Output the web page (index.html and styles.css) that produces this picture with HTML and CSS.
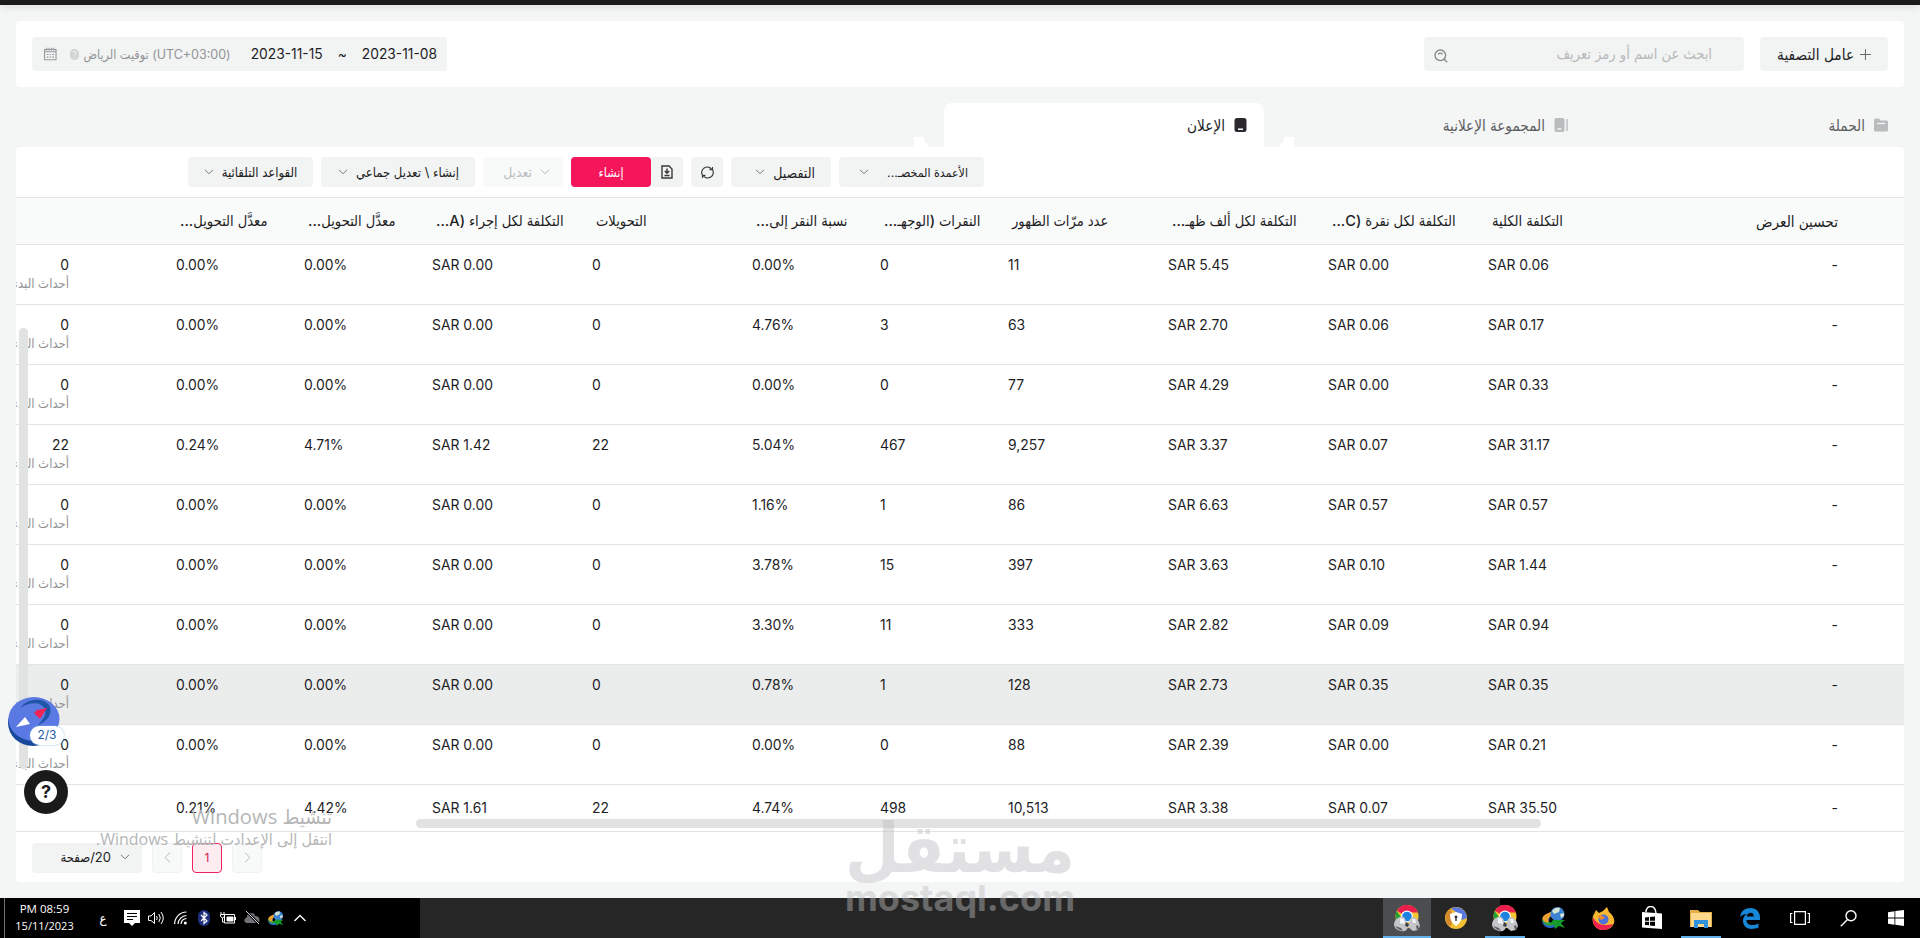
FILE: index.html
```html
<!DOCTYPE html>
<html lang="ar" dir="rtl">
<head>
  <meta charset="UTF-8" />
  <meta name="viewport" content="width=device-width, initial-scale=1.0"/>
  <title>مدير الإعلانات</title>
  <link rel="stylesheet" href="styles.css">
</head>
<body>
  <svg width="0" height="0" class="defs">
    <symbol id="down" viewBox="0 0 10 6"><path d="M1 .8l4 4 4-4" fill="none" stroke="currentColor"/></symbol>
    <symbol id="chrome" viewBox="0 0 26 28">
      <circle cx="13" cy="12.500" r="11.500" fill="#f6c52f"/>
      <path d="M13 12.500L3 7A11.500 11.500 0 0 1 24 8.500H13z" fill="#e91e4d"/>
      <path d="M2.800 7l8 12-1 4A11.500 11.500 0 0 1 2.800 7z" fill="#1fa034"/>
      <circle cx="13" cy="12.500" r="6" fill="#fff"/>
      <circle cx="13" cy="12.500" r="4.800" fill="#1e82e0"/>
      <path d="M0 20c1-5 4-7 7-7 3-1 5 2 5 6l3 1c0-5 2-7 5-7 3 1 5 4 6 9l-2 4-5 1-5-4c-1 4-4 5-7 4-4-1-7-3-7-7z" fill="#c4c5c8"/>
      <path d="M1 22l3 3 5 2-2-3zM22 22l1 4 2-1-1-4z" fill="#5b5c61"/>
      <path d="M12 18l3 2-1 3-3-1z" fill="#3f4046"/>
      <path d="M6 14l4 1 1 5-5-1zM18 15l3 0 1 4-3 0z" fill="#f3f3f3"/>
    </symbol>
    <symbol id="idm" viewBox="0 0 24 22">
      <path d="M9 5C2 8-1 13 1 17c3 5 10 5 15 1l-3-3c-3 2-6 2-6-1 0-2 1-4 3-6z" fill="#2a63c8"/>
      <path d="M9 5C2 8-1 13 1 15c3 4 8 5 12 2l-1-2c-3 1-6 1-6-2 0-2 2-4 4-6z" fill="#31a43c"/>
      <path d="M9 5C2 7-1 11 1 13c1 2 4 3 6 2-2-2 0-5 3-7z" fill="#eda12c"/>
      <circle cx="15.500" cy="7" r="7" fill="#3b82d2"/>
      <path d="M10 4c2-3 5-4 8-3l-1 4-5 2zM18 7l4-1 0 3-3 2z" fill="#d7e4cf"/>
      <path d="M11 13l12 0-4 3 4 5-6-2-4 3-1-4-4-1z" fill="#159a2c"/>
    </symbol>
  </svg>

  <div class="top-bar"></div>

  <main>
    <section class="filters">
      <button class="btn filter-btn">
        <svg width="11" height="11" viewBox="0 0 11 11"><path d="M5.500 0v11M0 5.500h11" stroke="#666"/></svg>
        <span>عامل التصفية</span>
      </button>
      <div class="search">
        <span>ابحث عن اسم أو رمز تعريف</span>
        <svg width="14" height="14" viewBox="0 0 14 14" fill="none" stroke="#85868a" stroke-width="1.300"><circle cx="6.300" cy="6.300" r="5.300"/><path d="M10.200 10.200l3 3M4 5.300q2.300-2.500 4.600 0"/></svg>
      </div>
      <div class="dates">
        <span>2023-11-08</span>
        <span class="tilde">~</span>
        <span>2023-11-15</span>
        <span class="zone">(UTC+03:00) توقيت الرياض</span>
        <span class="hint">?</span>
        <svg width="14" height="14" viewBox="0 0 14 14" fill="none" stroke="#96979a" stroke-width="1.200"><path d="M.6 2h12.800v11.400H.6zM.6 4.500h12.800M3 0v3M5.700 0v3M8.400 0v3M11 0v3"/><path d="M3 7.500h2m1.300 0h1.500m1.300 0h2M3 10.500h2m1.300 0h1.500m1.300 0h2"/></svg>
      </div>
    </section>

    <nav class="tabs">
      <div class="tab">
        <svg width="14" height="14" viewBox="0 0 14 14"><path d="M0 2q0-1.500 1.500-1.500H5l1.500 2h6q1.500 0 1.500 1.500v8q0 1.500-1.500 1.500h-11Q0 13.500 0 12z" fill="#b9bbbc"/><path d="M3 5.500h8" stroke="#f4f5f5" stroke-width="1.300"/></svg>
        <span>الحملة</span>
      </div>
      <div class="tab">
        <svg width="14" height="14" viewBox="0 0 14 14"><rect width="10" height="14" x=".5" rx="2" fill="#b9bbbc"/><path d="M3.500 11h4" stroke="#f4f5f5" stroke-width="1.500"/><path d="M13 1v12" stroke="#b9bbbc" stroke-width="1.400"/></svg>
        <span>المجموعة الإعلانية</span>
      </div>
      <div class="tab active">
        <svg width="14" height="14" viewBox="0 0 14 14"><rect width="12" height="14" x=".5" rx="2.500" fill="#2c2830"/><path d="M4 11.200h5" stroke="#fff" stroke-width="1.500"/></svg>
        <span>الإعلان</span>
      </div>
    </nav>

    <section class="card">
      <div class="toolbar">
        <button class="btn w145"><span>الأعمدة المخصـ...</span><svg class="arrow"><use href="#down"/></svg></button>
        <button class="btn w100 large"><span>التفصيل</span><svg class="arrow"><use href="#down"/></svg></button>
        <button class="btn w32"><svg width="13" height="13" viewBox="0 0 13 13" fill="none" stroke="#3c3c3e" stroke-width="1.200"><path d="M1.600 9.500A5.300 5.300 0 0 1 10.800 3.500M11.400 3.500A5.300 5.300 0 0 1 2.200 9.500M8.500 3.700h3V1M4.500 9.300h-3V12"/></svg></button>
        <div class="group">
          <button class="btn w32"><svg width="12" height="14" viewBox="0 0 12 14" fill="none" stroke="#38383a" stroke-width="1.400"><path d="M1 1h7l3 3v9H1z"/><path d="M6 3.500v4.500M3.800 6L6 8.200 8.200 6M3.500 10.500h5"/></svg></button>
          <button class="btn create"><span>إنشاء</span></button>
        </div>
        <button class="btn w80 disabled"><svg class="arrow"><use href="#down"/></svg><span>تعديل</span></button>
        <button class="btn w154"><span>إنشاء \ تعديل جماعي</span><svg class="arrow"><use href="#down"/></svg></button>
        <button class="btn w125"><span>القواعد التلقائية</span><svg class="arrow"><use href="#down"/></svg></button>
      </div>

      <div class="row head">
        <div class="opt"><span>تحسين العرض</span></div>
        <div><span>التكلفة الكلية</span></div>
        <div><span>التكلفة لكل نقرة (C...</span></div>
        <div><span>التكلفة لكل ألف ظهـ...</span></div>
        <div><span>عدد مرّات الظهور</span></div>
        <div><span>النقرات (الوجهـ...</span></div>
        <div><span>نسبة النقر إلى...</span></div>
        <div><span>التحويلات</span></div>
        <div><span>التكلفة لكل إجراء (A...</span></div>
        <div><span>معدَّل التحويل...</span></div>
        <div><span>معدَّل التحويل...</span></div>
        <div></div>
      </div>
      <div id="rows"></div>

      <div class="pager">
        <span class="page"><svg width="7" height="11" viewBox="0 0 7 11"><path d="M1 .7l5 4.800-5 4.800" fill="none" stroke="currentColor"/></svg></span>
        <span class="page current">1</span>
        <span class="page"><svg width="7" height="11" viewBox="0 0 7 11"><path d="M6 .7L1 5.500l5 4.800" fill="none" stroke="currentColor"/></svg></span>
        <div class="btn size"><svg class="arrow"><use href="#down"/></svg><span>20/صفحة</span></div>
      </div>
    </section>
  </main>

  <div class="scroll-y"></div>
  <div class="scroll-x"></div>

  <div class="compass">
    <svg width="54" height="52" viewBox="0 0 54 52">
      <ellipse cx="26" cy="27" rx="25" ry="23" fill="#17489b"/>
      <ellipse cx="27" cy="23" rx="25.500" ry="22" fill="#5b79e3"/>
      <path d="M13 12C20 2 36 1 42 9c5 9-3 17-12 21 6-6 10-12 8-17C34 5 22 6 13 12z" fill="#2056a8"/>
      <path d="M27 17l3-3 10-2-7 11z" fill="#ef2355"/>
      <path d="M9 31l9-10 5 7z" fill="#fff"/>
    </svg>
    <span>2/3</span>
  </div>
  <div class="help"><span>?</span></div>

  <div class="activate">
    <div class="activate-title"><span>تنشيط Windows</span></div>
    <div class="activate-text"><span>انتقل إلى الإعدادت لتنشيط Windows.</span></div>
  </div>

  <footer class="taskbar">
    <div class="apps">
      <div class="app sys"><svg width="16" height="16" viewBox="0 0 16 16" fill="#fff"><path d="M0 2.200l6.500-1v6.400H0zM7.300 1.100L16 0v7.600H7.300zM0 8.400h6.500v6.400L0 13.800zM7.300 8.400H16V16l-8.700-1.200z"/></svg></div>
      <div class="app sys"><svg width="17" height="17" viewBox="0 0 17 17" fill="none" stroke="#fff" stroke-width="1.400"><circle cx="11" cy="5.800" r="5"/><path d="M7.500 9.500L.8 16.200"/></svg></div>
      <div class="app sys"><svg width="20" height="14" viewBox="0 0 20 14" fill="none" stroke="#fff" stroke-width="1.200"><path d="M4.600.6h10.800v12.800H4.600zM2.500 2.500H.6v9h1.900M17.500 2.500h1.900v9h-1.900"/></svg></div>
      <div class="app first"><svg width="20" height="21" viewBox="0 0 20 21"><path d="M0 9C1 3 5 0 10.500 0 17 0 20 5 20 9v3H6.500c0 6 7 6 12 3.500v4C10 23 3 20 3 12.500c0-3 2-5.500 4-6.500-3 0-5 1-7 3zM6.700 8.500h7C13.800 3 7 4 6.700 8.500z" fill="#1787d8"/></svg></div>
      <div class="app open"><svg width="22" height="19" viewBox="0 0 22 19"><path d="M0 1h8l2 2h12v15H0z" fill="#e5ad48"/><path d="M1 4h20v14H1z" fill="#fbd88c"/><path d="M4 11h14v8h-4v-4H8v4H4z" fill="#3092dc"/></svg></div>
      <div class="app"><svg width="20" height="24" viewBox="0 0 20 24"><path d="M0 6l20 1.500V23L0 21.500z" fill="#fff"/><path d="M4 6c0-7 9-8 10 1" fill="none" stroke="#fff" stroke-width="1.400"/><path d="M3 11.500l4-.4v3.700H3zM8 11l5-.5v4.300H8zM3 15.700h4v3.600l-4-.4zM8 15.700h5V20l-5-.6z" fill="#000"/></svg></div>
      <div class="app"><svg width="23" height="23" viewBox="0 0 23 23"><path d="M1 9L4 3l3 3 4-2 4-4 2 5c4 3 6 7 5 11-2 5-6 7-11 7C4 23-1 16 1 9z" fill="#f7b72f"/><path d="M1 10c3 6 8 10 20 7-2 4-6 6-10 6C4 23 0 17 1 10z" fill="#f0204f"/><circle cx="11.500" cy="12.500" r="5" fill="#4d72dc"/><path d="M5 9c4-2 6 0 8 2l-4 2z" fill="#f58a24"/></svg></div>
      <div class="app"><svg width="24" height="22"><use href="#idm"/></svg></div>
      <div class="app open"><svg width="26" height="28"><use href="#chrome"/></svg></div>
      <div class="app"><svg width="22" height="22" viewBox="0 0 22 22"><circle cx="11" cy="11" r="11" fill="#f3c035"/><path d="M6 1.500A11 11 0 0 1 22 11l-5 2L11 5z" fill="#5a78df"/><path d="M6 1.500A11 11 0 0 0 5 20l3-6z" fill="#d28a2c"/><path d="M11 5l6 2c0 6-2 9-6 12-4-3-6-6-6-12z" fill="#fff"/><path d="M11 8.500a1.500 1.500 0 0 1 .7 2.800V14h-1.400v-2.700A1.500 1.500 0 0 1 11 8.500z" fill="#333"/></svg></div>
      <div class="app open current-app"><svg width="26" height="28"><use href="#chrome"/></svg></div>
    </div>
    <div class="tray">
      <div class="clock"><span>PM 08:59</span><span>15/11/2023</span></div>
      <div class="lang">ع</div>
      <div class="tray-icon"><svg width="16" height="16" viewBox="0 0 16 16"><path d="M0 0h16v13h-5l-3 3-3-3H0z" fill="#fff"/><path d="M3 3.500h10M3 6.500h10M3 9.500h6" stroke="#000"/></svg></div>
      <div class="tray-icon"><svg width="16" height="14" viewBox="0 0 16 14" fill="none" stroke="#fff"><path d="M.5 5h2.500l3.500-3.500v11L3 9.500H.5zM8.500 5q1.500 2 0 4M10.800 3q3 4 0 8M13 1q4.500 6 0 12"/></svg></div>
      <div class="tray-icon"><svg width="13" height="14" viewBox="0 0 13 14" fill="none" stroke="#fff"><path d="M.6 13A12 12 0 0 1 12.500 1M4 13a9 9 0 0 1 8.500-8.500M7 13a6 6 0 0 1 5.500-5.500" stroke-width="1.200"/><circle cx="11.300" cy="12" r="1.500" fill="#fff" stroke="none"/></svg></div>
      <div class="tray-icon"><svg width="12" height="16" viewBox="0 0 12 16"><rect width="12" height="16" rx="6" fill="#1e2f7d"/><path d="M3 5l6 6-3 2.500v-11L9 5l-6 6" fill="none" stroke="#fff" stroke-width="1.200"/></svg></div>
      <div class="tray-icon"><svg width="16" height="12" viewBox="0 0 16 12" fill="none" stroke="#fff"><path d="M4.500 9.500v-7h10v8.500h-10zM15.500 5v3M1 0v2.500M4 0v2.500M.5 2.500h4v2l-2 1.500-2-1.500zM2.500 6v4h2"/><path d="M7 5h6v4H7z" fill="#fff"/></svg></div>
      <div class="tray-icon"><svg width="16" height="14" viewBox="0 0 16 14"><path d="M2 12q-4-3 1-6 0-4 4-4 4 0 4 3 6 0 4 7z" fill="#747078"/><path d="M2 0l13 13" stroke="#000" stroke-width="2.400"/><path d="M2 0l13 13" stroke="#ddd"/></svg></div>
      <div class="tray-icon"><svg width="16" height="15"><use href="#idm"/></svg></div>
      <div class="tray-icon"><svg width="12" height="8" viewBox="0 0 12 8"><path d="M.5 7L6 1.500 11.500 7" fill="none" stroke="#fff" stroke-width="1.300"/></svg></div>
    </div>
  </footer>

  <svg class="brand" width="240" height="130" viewBox="0 0 240 130">
    <g fill="#bdbdc0" opacity=".44" direction="ltr">
      <text class="brand-ar" x="5" y="72" textLength="230" lengthAdjust="spacingAndGlyphs">مستقل</text>
      <text class="brand-en" x="5" y="111" textLength="230" lengthAdjust="spacingAndGlyphs">mostaql.com</text>
    </g>
  </svg>

  <script>
    // cost, cpc, cpm, impressions, clicks, ctr, conversions, cpa, cvr, cvr (impressions), result
    const ads = [
      ["0.06", "0.00", "5.45", "11", "0", "0.00", "0", "0.00", "0.00", "0.00", "0"],
      ["0.17", "0.06", "2.70", "63", "3", "4.76", "0", "0.00", "0.00", "0.00", "0"],
      ["0.33", "0.00", "4.29", "77", "0", "0.00", "0", "0.00", "0.00", "0.00", "0"],
      ["31.17", "0.07", "3.37", "9,257", "467", "5.04", "22", "1.42", "4.71", "0.24", "22"],
      ["0.57", "0.57", "6.63", "86", "1", "1.16", "0", "0.00", "0.00", "0.00", "0"],
      ["1.44", "0.10", "3.63", "397", "15", "3.78", "0", "0.00", "0.00", "0.00", "0"],
      ["0.94", "0.09", "2.82", "333", "11", "3.30", "0", "0.00", "0.00", "0.00", "0"],
      ["0.35", "0.35", "2.73", "128", "1", "0.78", "0", "0.00", "0.00", "0.00", "0"],
      ["0.21", "0.00", "2.39", "88", "0", "0.00", "0", "0.00", "0.00", "0.00", "0"],
      ["35.50", "0.07", "3.38", "10,513", "498", "4.74", "22", "1.61", "4.42", "0.21", ""]
    ];
    const money = [0, 1, 2, 7];
    const percent = [5, 8, 9];
    const rows = document.getElementById("rows");

    ads.forEach((ad, index) => {
      const row = document.createElement("div");
      row.className = "row";
      if (index === 7) row.classList.add("hover");
      if (index === ads.length - 1) row.classList.add("total");
      let html = `<div class="opt">-</div>`;
      ad.slice(0, 10).forEach((value, i) => {
        if (money.includes(i)) value = "SAR " + value;
        if (percent.includes(i)) value = value + "%";
        html += `<div dir="ltr">${value}</div>`;
      });
      html += ad[10] ? `<div class="result">${ad[10]}<small>أحداث البدء</small></div>` : `<div></div>`;
      row.innerHTML = html;
      rows.appendChild(row);
    });
  </script>
</body>
</html>
```
FILE: styles.css
```css
* {
  box-sizing: border-box;
}

body {
  margin: 0;
  height: 938px;
  overflow: hidden;
  position: relative;
  display: flex;
  flex-direction: column;
  background: #f4f5f5;
  color: #1d1d1f;
  font-family: Inter, "DejaVu Sans Condensed", "DejaVu Sans", sans-serif;
  font-size: 14px;
}

.defs {
  position: absolute;
}

.top-bar {
  height: 5px;
  background: #1a1a1a;
  box-shadow: 0 1px 8px rgba(0, 0, 0, 0.15);
}

main {
  flex: 1;
  padding: 16px 16px 0;
}

span {
  white-space: nowrap;
}

.btn {
  display: flex;
  align-items: center;
  height: 30px;
  padding: 0 13px;
  border: none;
  border-radius: 4px;
  background: #f2f3f3;
  color: #1d1d1f;
  font-family: inherit;
  font-size: 13px;
}

.arrow {
  width: 10px;
  height: 6px;
  flex: none;
  color: #77787b;
}

/* filters */
.filters {
  display: flex;
  height: 66px;
  padding: 16px;
  border-radius: 4px;
  background: #fff;
}

.filter-btn {
  width: 128px;
  height: 34px;
  padding: 0 17px;
  gap: 6px;
  font-size: 15.3px;
}

.search {
  display: flex;
  align-items: center;
  justify-content: space-between;
  width: 320px;
  height: 34px;
  margin-right: 16px;
  padding: 0 32px 0 10px;
  border-radius: 4px;
  background: #f2f3f3;
  color: #b8b9bb;
  font-size: 14.6px;
}

.search svg {
  margin-top: 3px;
}

.dates {
  display: flex;
  align-items: center;
  width: 415px;
  height: 34px;
  margin-right: auto;
  padding: 0 10px 0 12px;
  border-radius: 4px;
  background: #f2f3f3;
  font-size: 13.8px;
}

.tilde {
  margin: 0 15px;
}

.zone {
  margin-right: 20px;
  color: #929396;
  font-size: 12.5px;
}

.hint {
  width: 11px;
  height: 11px;
  margin: 0 4px 0 auto;
  border-radius: 50%;
  background: #d0d1d2;
  color: #f2f3f3;
  font-size: 9px;
  line-height: 11px;
  text-align: center;
}

.dates svg {
  margin-right: 13px;
}

/* tabs */
.tabs {
  display: flex;
  height: 44px;
  margin-top: 16px;
}

.tab {
  position: relative;
  display: flex;
  align-items: center;
  gap: 9px;
  width: 320px;
  padding-right: 16px;
  color: #5d5e62;
  font-size: 15.2px;
  font-weight: 500;
}

.tab.active {
  border-radius: 8px 8px 0 0;
  background: #fff;
  color: #1d1d1f;
}

.tab.active::before,
.tab.active::after {
  content: "";
  position: absolute;
  bottom: 0;
  width: 20px;
  height: 10px;
}

.tab.active::before {
  right: -30px;
  background: radial-gradient(circle at 0 0, transparent 10px, #fff 10.5px);
}

.tab.active::after {
  left: -30px;
  background: radial-gradient(circle at 100% 0, transparent 10px, #fff 10.5px);
}

/* table */
.card {
  height: 735px;
  border-radius: 4px;
  background: #fff;
  overflow: hidden;
}

.toolbar {
  display: flex;
  gap: 8px;
  height: 50px;
  padding: 10px 920px 0 0;
}

.toolbar .btn {
  flex: none;
  justify-content: center;
  gap: 8px;
}

.group {
  display: flex;
}

.toolbar .w32 { width: 32px; padding: 0; }
.w80 { width: 80px; }
.w100 { width: 100px; }
.w125 { width: 125px; }
.w145 { width: 145px; }
.w154 { width: 154px; }

.toolbar .w145,
.toolbar .w100 {
  justify-content: space-between;
  padding: 0 16px 0 24px;
}

.toolbar .w145 {
  padding-left: 20px;
  font-size: 12.3px;
}

.toolbar .large {
  font-size: 14px;
}

.toolbar .w154 {
  justify-content: space-between;
  padding: 0 16px 0 17px;
}

.toolbar .create {
  width: 80px;
  background: #f5155b;
  color: #fff;
  font-size: 12.5px;
}

.toolbar .disabled {
  justify-content: flex-start;
  background: #f8f9f9;
  color: #bcbdbf;
  font-size: 13.8px;
}

.disabled .arrow {
  color: #b4b5b7;
}

.row {
  display: grid;
  grid-template-columns: 272px 160px 160px 160px 160px 128px 128px 160px 160px 128px 128px 144px;
  height: 60px;
  border-bottom: 1px solid #e3e4e5;
}

.row > div {
  padding: 12px 0 0 16px;
  font-size: 13.9px;
  line-height: 17px;
  text-align: left;
  white-space: nowrap;
}

.row > .opt {
  padding-right: 66px;
  text-align: right;
}

.row.head {
  height: 48px;
  border-top: 1px solid #e3e4e5;
  background: #f9fafa;
  font-weight: 500;
}

.row.head > div {
  padding-top: 15px;
  padding-left: 20px;
  font-size: 14.6px;
}

.row.head > .opt {
  font-size: 15.2px;
}

.row.hover {
  background: #ebecec;
}

.row.total {
  height: 47px;
}

.row.total > div {
  padding-top: 15px;
}

.row > .result {
  padding: 12px 91px 0 0;
  text-align: right;
}

.result small {
  display: block;
  margin-top: 1px;
  color: #929396;
  font-size: 13px;
}

.pager {
  display: flex;
  justify-content: flex-end;
  gap: 10px;
  padding: 11px 0 0 16px;
}

.page {
  display: flex;
  align-items: center;
  justify-content: center;
  width: 30px;
  height: 30px;
  padding-bottom: 1px;
  border: 1px solid #f0f1f1;
  border-radius: 4px;
  background: #f8f9f9;
  color: #b9babc;
  font-size: 12px;
}

.page.current {
  border-color: #f0215f;
  background: #fdedf1;
  color: #d02050;
}

.size {
  width: 110px;
  padding: 0 12px 2px;
  gap: 9px;
}

/* floating */
.scroll-y,
.scroll-x {
  position: absolute;
  border-radius: 5px;
  background: #e1e2e2;
}

.scroll-y {
  left: 19px;
  top: 328px;
  width: 9px;
  height: 441px;
}

.scroll-x {
  left: 416px;
  top: 819px;
  width: 1125px;
  height: 9px;
}

.compass {
  position: absolute;
  left: 7px;
  top: 696px;
}

.compass span {
  position: absolute;
  left: 23px;
  top: 30px;
  width: 34px;
  height: 19px;
  border-radius: 10px;
  background: #fff;
  box-shadow: 0 0 2px #7fb8e8;
  color: #1f5aa8;
  font-size: 12px;
  line-height: 18px;
  text-align: center;
  direction: ltr;
}

.help {
  position: absolute;
  left: 24px;
  top: 770px;
  width: 44px;
  height: 44px;
  padding: 11px;
  border-radius: 50%;
  background: #1a1a1a;
}

.help span {
  display: block;
  height: 22px;
  border-radius: 50%;
  background: #fff;
  font-size: 18px;
  font-weight: 700;
  line-height: 22px;
  text-align: center;
}

.activate {
  position: absolute;
  left: 92px;
  top: 803px;
  width: 240px;
  color: #b5b6b7;
  font-family: "Open Sans", "DejaVu Sans Condensed", "DejaVu Sans", sans-serif;
}

.activate-title {
  font-size: 20.2px;
  line-height: 26px;
}

.activate-text {
  font-size: 16px;
  line-height: 20px;
}

/* taskbar */
.taskbar {
  display: flex;
  justify-content: space-between;
  height: 40px;
  background: linear-gradient(90deg, #000 420px, #262626 420px, #262626 1500px, #000 1500px);
}

.apps,
.tray {
  display: flex;
}

.app {
  display: flex;
  align-items: center;
  justify-content: center;
  width: 48px;
  margin-right: 1px;
}

.app.sys {
  margin-right: 0;
}

.app.first {
  margin-right: 2px;
}

.app.open {
  background: linear-gradient(#62b0ea, #62b0ea) bottom / 40px 2px no-repeat;
}

.app.current-app {
  background: linear-gradient(#62b0ea, #62b0ea) bottom / 100% 2px no-repeat, #4b4d51;
}

.tray {
  direction: ltr;
  align-items: center;
  color: #fff;
  font-family: "Open Sans", "DejaVu Sans Condensed", "DejaVu Sans", sans-serif;
}

.clock {
  display: flex;
  flex-direction: column;
  align-items: center;
  width: 80px;
  height: 40px;
  margin: 0 2px 0 4px;
  padding: 2px 0 0;
  border-left: 1px solid #6d6d6d;
  font-size: 11px;
  line-height: 17px;
}

.clock span:first-child {
  font-size: 11.5px;
}

.lang {
  width: 34px;
  text-align: center;
  font-size: 13px;
}

.tray-icon {
  display: flex;
  align-items: center;
  justify-content: center;
  width: 24px;
}

.brand {
  position: absolute;
  left: 840px;
  top: 800px;
}

.brand-ar {
  font: bold 68px "DejaVu Sans", sans-serif;
}

.brand-en {
  font: bold 36px Inter, sans-serif;
}
```
